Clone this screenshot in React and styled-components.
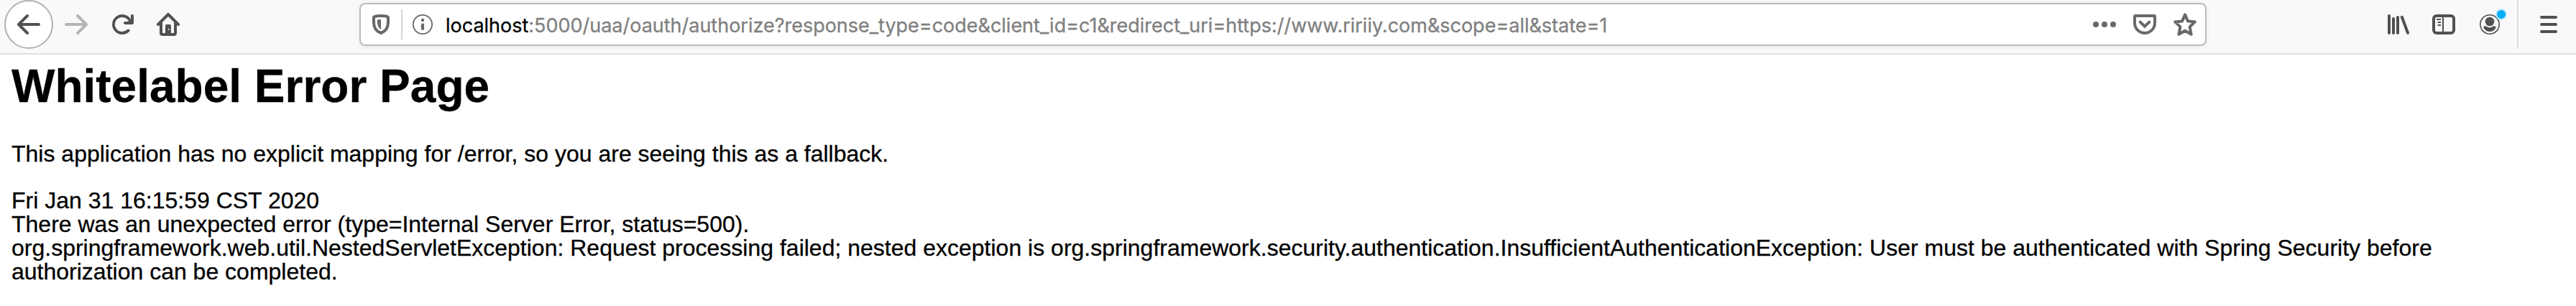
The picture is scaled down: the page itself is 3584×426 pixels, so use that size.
import React from "react";
import styled, { createGlobalStyle } from "styled-components";

const GlobalStyle = createGlobalStyle`
  * { box-sizing: border-box; }
  body {
    margin: 0;
    background: #fff;
    color: #000;
    font-family: "Liberation Sans", Arial, Helvetica, sans-serif;
  }
`;

const Window = styled.div`
  width: 3584px;
  height: 426px;
  overflow: hidden;
  background: #fff;
`;

const Toolbar = styled.header`
  display: flex;
  align-items: flex-start;
  height: 76px;
  background: #f9f9fa;
  border-bottom: 2px solid #e0e0e1;
`;

const NavGroup = styled.nav`
  display: flex;
  align-items: center;
  gap: 32px;
  width: 500px;
  height: 68px;
  padding-left: 6px;
`;

const ToolButton = styled.button`
  position: relative;
  display: flex;
  padding: 0;
  border: 0;
  background: none;
  color: ${(p) => (p.$disabled ? "#b5b5b6" : "#515153")};
`;

const BackButton = styled(ToolButton)`
  align-items: center;
  justify-content: center;
  width: 68px;
  height: 68px;
  margin-right: -16px;
  border: 2px solid #b1b1b1;
  border-radius: 50%;
  background: #fff;
`;

const AddressBar = styled.div`
  display: flex;
  align-items: center;
  width: 2570px;
  height: 60px;
  margin-top: 4px;
  padding: 0 12px;
  border: 2px solid #bbbbbc;
  border-radius: 8px;
  background: #fff;
  box-shadow: 0 2px 8px rgba(0, 0, 0, 0.06);
  color: #686869;
`;

const Separator = styled.span`
  width: 2px;
  height: 42px;
  margin: 0 12px;
  background: #d3d3d4;
`;

const Address = styled.div`
  flex: 1;
  margin: 4px 0 0 16px;
  font-family: Inter, "Liberation Sans", sans-serif;
  font-size: 27px;
  line-height: 40px;
  letter-spacing: -0.01px;
  -webkit-text-stroke: 0.3px;
  white-space: nowrap;
  color: #808080;
`;

const Host = styled.span`
  color: #000;
`;

const PageActions = styled.div`
  display: flex;
  gap: 24px;
`;

const ToolGroup = styled.div`
  display: flex;
  align-items: center;
  gap: 32px;
  height: 68px;
  margin-left: auto;
  padding-right: 22px;
  border-right: 2px solid #dcdcdd;
`;

const MenuSlot = styled.div`
  display: flex;
  align-items: center;
  height: 68px;
  padding: 0 22px 0 26px;
`;

const Badge = styled.span`
  position: absolute;
  top: -6px;
  right: -8px;
  width: 16px;
  height: 16px;
  border: 2px solid #bdeafd;
  border-radius: 50%;
  background: #00aef8;
`;

const Content = styled.main`
  padding: 11px 16px 0;
  font-size: 32px;
  line-height: 33px;
  -webkit-text-stroke: 0.3px;
`;

const Title = styled.h1`
  margin: 0 0 45px;
  font-size: 64px;
  line-height: 66px;
`;

const Paragraph = styled.p`
  margin: 0 0 32px;
`;

const Icon = ({ children, size = 32 }) => (
  <svg width={size} height={size} viewBox="0 0 16 16" fill="currentColor">
    {children}
  </svg>
);

const ARROW =
  "M15 7H3.414l4.293-4.293a1 1 0 0 0-1.414-1.414l-6 6a1 1 0 0 0 0 1.414l6 6a1 1 0 0 0 1.414-1.414L3.414 9H15a1 1 0 0 0 0-2z";

const BackIcon = () => <Icon><path d={ARROW} /></Icon>;

const ForwardIcon = () => (
  <Icon><path d={ARROW} transform="translate(16 0) scale(-1 1)" /></Icon>
);

const ReloadIcon = () => (
  <Icon>
    <path d="M15 1a1 1 0 0 0-1 1v2.418A6.995 6.995 0 1 0 8 15a6.954 6.954 0 0 0 4.95-2.05 1 1 0 0 0-1.414-1.414A5.019 5.019 0 1 1 12.549 6H10a1 1 0 0 0 0 2h5a1 1 0 0 0 1-1V2a1 1 0 0 0-1-1z" />
  </Icon>
);

const HomeIcon = () => (
  <Icon>
    <path
      d="M1 8l7-7 7 7M3 7v7q0 1 1 1h8q1 0 1-1V7"
      fill="none" stroke="currentColor" strokeWidth="2" strokeLinecap="round" strokeLinejoin="round"
    />
    <path
      fillRule="evenodd"
      d="M7 8h2a1 1 0 0 1 1 1v5.5H6V9a1 1 0 0 1 1-1zm1.5 3a.5.5 0 1 0 0 1 .5.5 0 0 0 0-1z"
    />
  </Icon>
);

const ShieldIcon = () => (
  <Icon>
    <path
      d="M8 2C6.2 2 4.600 2.250 3.500 2.600Q3 2.800 3 3.300V6.500C3 10.500 5.200 13 8 14C10.800 13 13 10.500 13 6.500V3.300Q13 2.800 12.500 2.600C11.400 2.250 9.800 2 8 2z"
      fill="none" stroke="currentColor" strokeWidth="2" strokeLinejoin="round"
    />
    <path d="M8 4.500V11.500C6.200 10.400 5.500 8.700 5.500 6.500V4.800z" />
  </Icon>
);

const InfoIcon = () => (
  <Icon>
    <circle cx="8" cy="8" r="6.550" fill="none" stroke="currentColor" strokeWidth="0.900" />
    <circle cx="8" cy="5" r="1.100" />
    <rect x="6.950" y="7.200" width="2.100" height="4.800" rx="1" />
  </Icon>
);

const MoreIcon = () => (
  <Icon>
    <circle cx="2" cy="8" r="2" />
    <circle cx="8" cy="8" r="2" />
    <circle cx="14" cy="8" r="2" />
  </Icon>
);

const PocketIcon = () => (
  <Icon>
    <path
      d="M1.500 2h13q.5 0 .5.500V7a7 7 0 0 1-14 0V2.500Q1 2 1.500 2zM4.800 6.300L8 9.400l3.200-3.100"
      fill="none" stroke="currentColor" strokeWidth="2" strokeLinecap="round" strokeLinejoin="miter"
    />
  </Icon>
);

const StarIcon = () => (
  <Icon>
    <path
      d="M8 1.200L9.950 5.700L14.900 6.200L11.300 9.700L12.300 14.900L8 12.400L3.700 14.900L4.700 9.700L1.100 6.200L6.050 5.700z"
      fill="none" stroke="currentColor" strokeWidth="2" strokeLinejoin="round"
    />
  </Icon>
);

const LibraryIcon = () => (
  <Icon>
    <path
      d="M2 2v12M5 4v10M8 3v11M10.900 2.900l4.100 11"
      fill="none" stroke="currentColor" strokeWidth="2" strokeLinecap="round"
    />
  </Icon>
);

const SidebarIcon = () => (
  <Icon>
    <rect x="1" y="2" width="14" height="12" rx="2" fill="none" stroke="currentColor" strokeWidth="2" />
    <rect x="7" y="2" width="1" height="12" />
    <path
      d="M3.400 4.500h2.300M4.200 6.500h1.500M4.200 8.500h1.500"
      fill="none" stroke="currentColor" strokeWidth="1" strokeLinecap="round"
    />
  </Icon>
);

const AccountIcon = () => (
  <Icon>
    <circle cx="8" cy="8" r="6.600" fill="none" stroke="currentColor" strokeWidth="0.800" />
    <circle cx="8" cy="6" r="3.150" />
    <path d="M4.600 9.100C3.700 9.300 3.500 10.200 4 10.900C4.900 12.300 6.400 13 8 13s3.100-.7 4-2.100c.5-.7.3-1.600-.6-1.800-.5-.1-.9.100-1.300.400-1.300.9-2.900.9-4.200 0-.4-.3-.8-.5-1.300-.4z" />
  </Icon>
);

const MenuIcon = () => (
  <Icon>
    <path d="M3 3h10M3 8h10M3 13h10" fill="none" stroke="currentColor" strokeWidth="2" strokeLinecap="round" />
  </Icon>
);

export default function App() {
  return (
    <Window>
      <GlobalStyle />
      <Toolbar>
        <NavGroup>
          <BackButton aria-label="Back"><BackIcon /></BackButton>
          <ToolButton $disabled aria-label="Forward"><ForwardIcon /></ToolButton>
          <ToolButton aria-label="Reload"><ReloadIcon /></ToolButton>
          <ToolButton aria-label="Home"><HomeIcon /></ToolButton>
        </NavGroup>
        <AddressBar>
          <ShieldIcon />
          <Separator />
          <InfoIcon />
          <Address>
            <Host>localhost</Host>
            :5000/uaa/oauth/authorize?response_type=code&amp;client_id=c1&amp;redirect_uri=https://www.ririiy.com&amp;scope=all&amp;state=1
          </Address>
          <PageActions>
            <MoreIcon />
            <PocketIcon />
            <StarIcon />
          </PageActions>
        </AddressBar>
        <ToolGroup>
          <ToolButton aria-label="Library"><LibraryIcon /></ToolButton>
          <ToolButton aria-label="Sidebars"><SidebarIcon /></ToolButton>
          <ToolButton aria-label="Account"><AccountIcon /><Badge /></ToolButton>
        </ToolGroup>
        <MenuSlot>
          <ToolButton aria-label="Menu"><MenuIcon /></ToolButton>
        </MenuSlot>
      </Toolbar>
      <Content>
        <Title>Whitelabel Error Page</Title>
        <Paragraph>
          This application has no explicit mapping for /error, so you are seeing this as a fallback.
        </Paragraph>
        <div>Fri Jan 31 16:15:59 CST 2020</div>
        <div>There was an unexpected error (type=Internal Server Error, status=500).</div>
        <div>
          org.springframework.web.util.NestedServletException: Request processing failed; nested exception is
          org.springframework.security.authentication.InsufficientAuthenticationException: User must be
          authenticated with Spring Security before authorization can be completed.
        </div>
      </Content>
    </Window>
  );
}
